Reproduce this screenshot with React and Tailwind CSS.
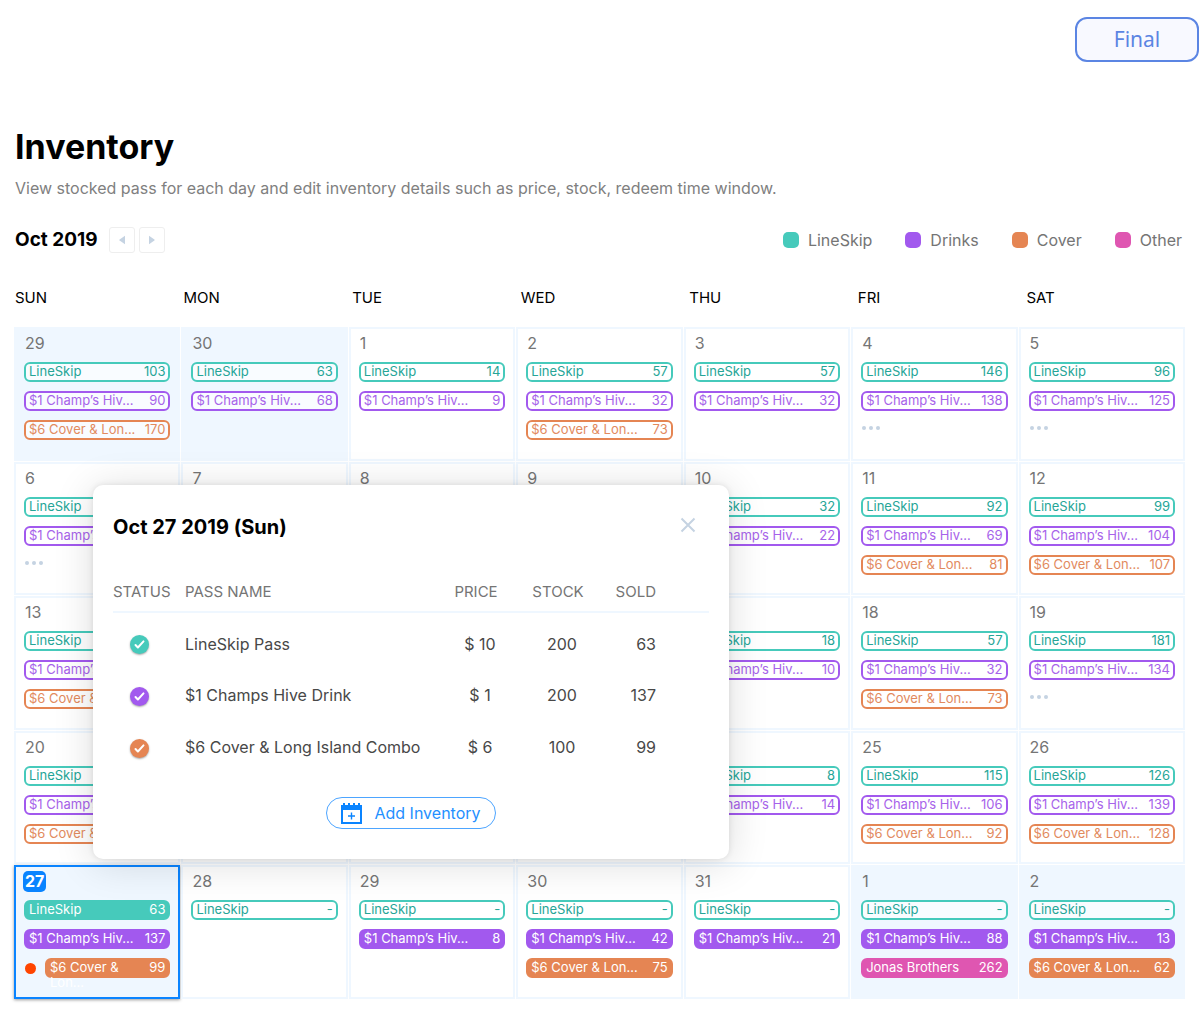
import React from "react";

const outlined = {
  line: "border-[#46cabb] bg-white/60 text-[#26a597]",
  drink: "border-[#a259ee] bg-white/60 text-[#a763ea]",
  cover: "border-[#e58553] bg-white/60 text-[#e28a5e]",
  other: "border-[#df56b1] bg-white/60 text-[#df56b1]",
};

const filled = {
  line: "border-[#46cabb] bg-[#46cabb] text-white",
  drink: "border-[#a259ee] bg-[#a259ee] text-white",
  cover: "border-[#e58553] bg-[#e58553] text-white",
  other: "border-[#df56b1] bg-[#df56b1] text-white",
};

const names = {
  line: "LineSkip",
  drink: "$1 Champ’s Hiv...",
  cover: "$6 Cover & Lon...",
  other: "Jonas Brothers",
};

const L = (n) => ({ kind: "line", count: n });
const D = (n, solid) => ({ kind: "drink", count: n, solid });
const C = (n, solid) => ({ kind: "cover", count: n, solid });
const O = (n) => ({ kind: "other", count: n, solid: true });

const weeks = [
  [
    { day: 29, muted: true, items: [L(103), D(90), C(170)] },
    { day: 30, muted: true, items: [L(63), D(68)] },
    { day: 1, items: [L(14), D(9)] },
    { day: 2, items: [L(57), D(32), C(73)] },
    { day: 3, items: [L(57), D(32)] },
    { day: 4, items: [L(146), D(138)], more: true },
    { day: 5, items: [L(96), D(125)], more: true },
  ],
  [
    { day: 6, items: [L(""), D("")], more: true },
    { day: 7, items: [] },
    { day: 8, items: [] },
    { day: 9, items: [] },
    { day: 10, items: [L(32), D(22)] },
    { day: 11, items: [L(92), D(69), C(81)] },
    { day: 12, items: [L(99), D(104), C(107)] },
  ],
  [
    { day: 13, items: [L(""), D(""), C("")] },
    { day: "", items: [] },
    { day: "", items: [] },
    { day: "", items: [] },
    { day: "", items: [L(18), D(10)] },
    { day: 18, items: [L(57), D(32), C(73)] },
    { day: 19, items: [L(181), D(134)], more: true },
  ],
  [
    { day: 20, items: [L(""), D(""), C("")] },
    { day: "", items: [] },
    { day: "", items: [] },
    { day: "", items: [] },
    { day: "", items: [L(8), D(14)] },
    { day: 25, items: [L(115), D(106), C(92)] },
    { day: 26, items: [L(126), D(139), C(128)] },
  ],
  [
    {
      day: 27,
      selected: true,
      items: [
        { kind: "line", count: 63, solid: true },
        D(137, true),
        { kind: "cover", count: 99, solid: true, alert: true },
      ],
    },
    { day: 28, items: [L("-")] },
    { day: 29, items: [L("-"), D(8, true)] },
    { day: 30, items: [L("-"), D(42, true), C(75, true)] },
    { day: 31, items: [L("-"), D(21, true)] },
    { day: 1, muted: true, items: [L("-"), D(88, true), O(262)] },
    { day: 2, muted: true, items: [L("-"), D(13, true), C(62, true)] },
  ],
];

const legend = [
  ["LineSkip", "bg-[#46cabb]"],
  ["Drinks", "bg-[#a259ee]"],
  ["Cover", "bg-[#e58553]"],
  ["Other", "bg-[#df56b1]"],
];

const passes = [
  ["LineSkip Pass", "$ 10", 200, 63, "bg-[#46cabb]"],
  ["$1 Champs Hive Drink", "$ 1", 200, 137, "bg-[#a259ee]"],
  ["$6 Cover & Long Island Combo", "$ 6", 100, 99, "bg-[#e58553]"],
];

function Pill({ item }) {
  const tone = (item.solid ? filled : outlined)[item.kind];
  return (
    <li className="flex items-center">
      {item.alert && <span className="mr-[9px] ml-px size-[11px] shrink-0 rounded-full bg-[#ff4500]" />}
      <div className={`flex h-5 min-w-0 flex-1 items-start justify-between rounded-md border-2 px-[3px] text-[13px] leading-[15px] ${tone}`}>
        <span className={item.alert ? "w-20" : "whitespace-nowrap"}>{names[item.kind]}</span>
        <span>{item.count}</span>
      </div>
    </li>
  );
}

function Day({ cell }) {
  const frame = cell.selected
    ? "border-[#0a84ff] bg-[#eff7ff] shadow-[0_1px_3px_rgba(0,0,0,0.4)]"
    : cell.muted
      ? "border-[#eff7ff] bg-[#eff7ff]"
      : "border-[#eff7ff] bg-white";
  return (
    <td className={`block min-w-0 border-2 px-2 pt-[3px] ${frame}`}>
      <div className="flex h-[22px] items-center text-base text-[#757575]">
        {cell.selected ? (
          <span className="-ml-px flex h-[21px] items-center rounded-[5px] bg-[#0a84ff] px-[2px] font-bold text-white">{cell.day}</span>
        ) : (
          <span className="pl-px">{cell.day}</span>
        )}
      </div>
      <ul className="mt-2 flex flex-col gap-[9px]">
        {cell.items.map((item) => (
          <Pill key={item.kind} item={item} />
        ))}
      </ul>
      {cell.more && (
        <button aria-label="Show more passes" className="mt-[15px] flex gap-[3px] pl-px">
          <span className="size-1 rounded-full bg-[#c5d3e2]" />
          <span className="size-1 rounded-full bg-[#c5d3e2]" />
          <span className="size-1 rounded-full bg-[#c5d3e2]" />
        </button>
      )}
    </td>
  );
}

function DayDetails() {
  return (
    <section
      aria-label="Oct 27 2019 (Sun)"
      className="absolute top-[199px] left-[79px] w-[636px] rounded-[10px] bg-white px-5 pt-7 pb-[30px] shadow-[0_0_6px_rgba(0,0,0,0.10),0_4px_40px_rgba(0,0,0,0.14)]"
    >
      <header className="flex h-7 items-center justify-between">
        <h2 className="text-xl font-bold text-black">Oct 27 2019 (Sun)</h2>
        <button aria-label="Close" className="mr-[13px] mb-1 text-[#c5d3e2]">
          <svg width="16" height="16" viewBox="0 0 16 16" fill="none" stroke="currentColor" strokeWidth="2">
            <path d="M1.5 1.5l13 13M14.5 1.5l-13 13" />
          </svg>
        </button>
      </header>
      <table className="mt-9 w-full table-fixed border-collapse text-base text-[#484848]">
        <colgroup>
          <col className="w-[72px]" />
          <col />
          <col className="w-[70px]" />
          <col className="w-[94px]" />
          <col className="w-[104px]" />
        </colgroup>
        <thead>
          <tr className="h-[35px] border-b-2 border-[#eff7ff] text-[15px] text-[#757575]">
            <th className="pb-1 text-left font-normal">STATUS</th>
            <th className="pb-1 text-left font-normal">PASS NAME</th>
            <th className="pb-1 text-center font-normal">PRICE</th>
            <th className="pb-1 text-center font-normal">STOCK</th>
            <th className="pr-[53px] pb-1 text-right font-normal">SOLD</th>
          </tr>
        </thead>
        <tbody>
          {passes.map(([name, price, stock, sold, tone]) => (
            <tr key={name} className="h-[52px]">
              <td className="pt-3 pl-[17px]">
                <span className={`flex size-[19px] items-center justify-center rounded-full shadow-[0_1px_2px_rgba(0,0,0,0.35)] ${tone}`}>
                  <svg width="11" height="11" viewBox="0 0 11 11" fill="none" stroke="white" strokeWidth="2" strokeLinecap="round" strokeLinejoin="round" role="img" aria-label="Active">
                    <path d="M1.5 6l2.4 2.5L9.5 2.4" />
                  </svg>
                </span>
              </td>
              <td className="pt-[10px] whitespace-nowrap">{name}</td>
              <td className="pt-[10px] pl-2 text-center">{price}</td>
              <td className="pt-[10px] pl-2 text-center">{stock}</td>
              <td className="pt-[10px] pr-[53px] text-right">{sold}</td>
            </tr>
          ))}
        </tbody>
      </table>
      <div className="mt-[29px] flex justify-center">
        <button className="flex h-8 items-center gap-3 rounded-full border border-[#4da5ff] px-[14px] text-base text-[#2490ff]">
          <svg width="21" height="21" viewBox="0 0 21 21" fill="none" aria-hidden="true">
            <path fill="#0a84ff" fillRule="evenodd" d="M0 2h2V0h2v2h3V0h2v2h3V0h2v2h3V0h2v2h2v19H0zM2 7v12h17V7z" />
            <path d="M10.5 9.5v7M7 13h7" stroke="#0a84ff" strokeWidth="1.4" />
          </svg>
          Add Inventory
        </button>
      </div>
    </section>
  );
}

export default function App() {
  return (
    <div className="bg-white pb-[30px] font-['Inter','Liberation_Sans',sans-serif]">
      <div className="flex justify-end pt-[17px] pr-px">
        <button className="h-[45px] w-[124px] rounded-xl border-2 border-[#5b85e3] bg-[#f8f9ff] font-['Noto_Sans',sans-serif] text-[21px] leading-none text-[#5b85e3]">
          Final
        </button>
      </div>
      <main className="pr-[15px] pl-[14px]">
        <h1 className="mt-[65px] pl-px text-[34px] leading-10 font-bold text-black">Inventory</h1>
        <p className="mt-[10px] pl-px text-base leading-[22px] text-[#808080]">
          View stocked pass for each day and edit inventory details such as price, stock, redeem time window.
        </p>
        <div className="mt-[28px] flex h-[26px] items-center justify-between pr-[3px]">
          <div className="flex items-center">
            <h2 className="pl-px text-[19px] font-bold text-black">Oct 2019</h2>
            <button aria-label="Previous month" className="ml-[11px] flex size-[26px] items-center justify-center rounded-[3px] border border-[#eeeeee]">
              <svg width="6" height="10" viewBox="0 0 6 10" fill="#c5d3e2"><path d="M6 .8v8.4L.6 5.6a.8.8 0 010-1.2z" /></svg>
            </button>
            <button aria-label="Next month" className="ml-1 flex size-[26px] items-center justify-center rounded-[3px] border border-[#eeeeee]">
              <svg width="6" height="10" viewBox="0 0 6 10" fill="#c5d3e2"><path d="M0 .8v8.4l5.4-3.6a.8.8 0 000-1.2z" /></svg>
            </button>
          </div>
          <ul className="flex gap-[33px] text-base text-[#757575]">
            {legend.map(([label, tone]) => (
              <li key={label} className="flex items-center gap-[9px]">
                <span className={`size-4 rounded-[5px] ${tone}`} />
                {label}
              </li>
            ))}
          </ul>
        </div>
        <div className="relative mt-[33px]">
          <table className="block" aria-label="Inventory for October 2019">
            <thead className="block">
              <tr className="-mr-[10px] grid h-[41px] grid-cols-7 pl-px text-[15px] leading-6 text-black">
                {["SUN", "MON", "TUE", "WED", "THU", "FRI", "SAT"].map((d) => (
                  <th key={d} className="text-left font-normal">{d}</th>
                ))}
              </tr>
            </thead>
            <tbody className="grid min-h-[672px] auto-rows-fr grid-cols-7 gap-px">
              {weeks.map((week, i) => (
                <tr key={i} className="contents">
                  {week.map((cell, j) => (
                    <Day key={j} cell={cell} />
                  ))}
                </tr>
              ))}
            </tbody>
          </table>
          <DayDetails />
        </div>
      </main>
    </div>
  );
}
